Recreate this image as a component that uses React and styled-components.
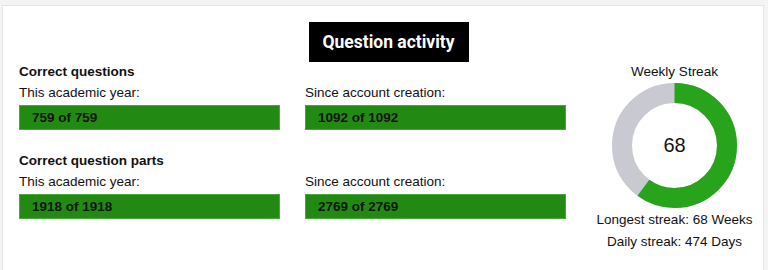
import React from "react";
import styled, { createGlobalStyle } from "styled-components";

const GlobalStyle = createGlobalStyle`
  body {
    margin: 0;
    background: #f4f4f4;
    font-family: "Liberation Sans", Arial, sans-serif;
    color: #111;
  }
`;

const Page = styled.div`
  padding: 5px 4px 0 2px;
  height: 270px;
  box-sizing: border-box;
  overflow: hidden;
`;

const Card = styled.div`
  background: #fff;
  border: 1px solid #e4e4e4;
  border-bottom: none;
  height: 300px;
  padding: 16px 5px 0 16px;
  box-sizing: border-box;
`;

const Header = styled.div`
  display: flex;
  justify-content: center;
`;

const Title = styled.h2`
  margin: 0;
  height: 40px;
  width: 160px;
  background: #000;
  color: #fff;
  font-family: Roboto, "Noto Sans", sans-serif;
  font-weight: 700;
  font-size: 17.5px;
  display: flex;
  align-items: center;
  justify-content: center;
`;

const Body = styled.div`
  display: flex;
  margin-top: 2px;
`;

const Stats = styled.div`
  width: 572px;
  display: flex;
  flex-direction: column;
  gap: 23px;
`;

const Section = styled.div`
  display: grid;
  grid-template-columns: 286px 286px;
`;

const SectionTitle = styled.div`
  grid-column: 1 / -1;
  font-weight: 700;
  font-size: 13.5px;
  line-height: 16px;
  margin-bottom: 5px;
`;

const Stat = styled.div`
  display: flex;
  flex-direction: column;
`;

const StatLabel = styled.div`
  font-size: 13.5px;
  line-height: 16px;
`;

const Bar = styled.div`
  margin-top: 4px;
  width: 261px;
  height: 25px;
  box-sizing: border-box;
  background: #228a12;
  border: 1px solid #4aa63e;
  padding-left: 12px;
  display: flex;
  align-items: center;
  font-weight: 700;
  font-size: 13.5px;
  color: #141414;
`;

const Streak = styled.div`
  flex: 1;
  display: flex;
  flex-direction: column;
  align-items: center;
`;

const StreakTitle = styled.div`
  font-size: 13.5px;
  line-height: 16px;
`;

const Donut = styled.div`
  position: relative;
  width: 125px;
  height: 125px;
  margin-top: 3px;
  margin-bottom: 1px;
`;

const DonutValue = styled.div`
  position: absolute;
  inset: 0;
  display: flex;
  align-items: center;
  justify-content: center;
  font-size: 20px;
`;

const StreakLine = styled.div`
  font-size: 13.5px;
  line-height: 22px;
`;

const stats = [
  { title: "Correct questions", year: "759 of 759", all: "1092 of 1092" },
  { title: "Correct question parts", year: "1918 of 1918", all: "2769 of 2769" },
];

const R = 52.5;
const C = 2 * Math.PI * R;
const fraction = 0.6;

export default function App() {
  return (
    <Page>
      <GlobalStyle />
      <Card>
        <Header>
          <Title>Question activity</Title>
        </Header>
        <Body>
          <Stats>
            {stats.map((s) => (
              <Section key={s.title}>
                <SectionTitle>{s.title}</SectionTitle>
                <Stat>
                  <StatLabel>This academic year:</StatLabel>
                  <Bar>{s.year}</Bar>
                </Stat>
                <Stat>
                  <StatLabel>Since account creation:</StatLabel>
                  <Bar>{s.all}</Bar>
                </Stat>
              </Section>
            ))}
          </Stats>
          <Streak>
            <StreakTitle>Weekly Streak</StreakTitle>
            <Donut>
              <svg width="125" height="125" viewBox="0 0 125 125">
                <circle cx="62.5" cy="62.5" r={R} fill="none" stroke="#c8c9d1" strokeWidth="20" />
                <circle
                  cx="62.5"
                  cy="62.5"
                  r={R}
                  fill="none"
                  stroke="#27a41c"
                  strokeWidth="20"
                  strokeDasharray={`${C * fraction} ${C}`}
                  transform="rotate(-90 62.5 62.5)"
                />
              </svg>
              <DonutValue>68</DonutValue>
            </Donut>
            <StreakLine>Longest streak: 68 Weeks</StreakLine>
            <StreakLine>Daily streak: 474 Days</StreakLine>
          </Streak>
        </Body>
      </Card>
    </Page>
  );
}
